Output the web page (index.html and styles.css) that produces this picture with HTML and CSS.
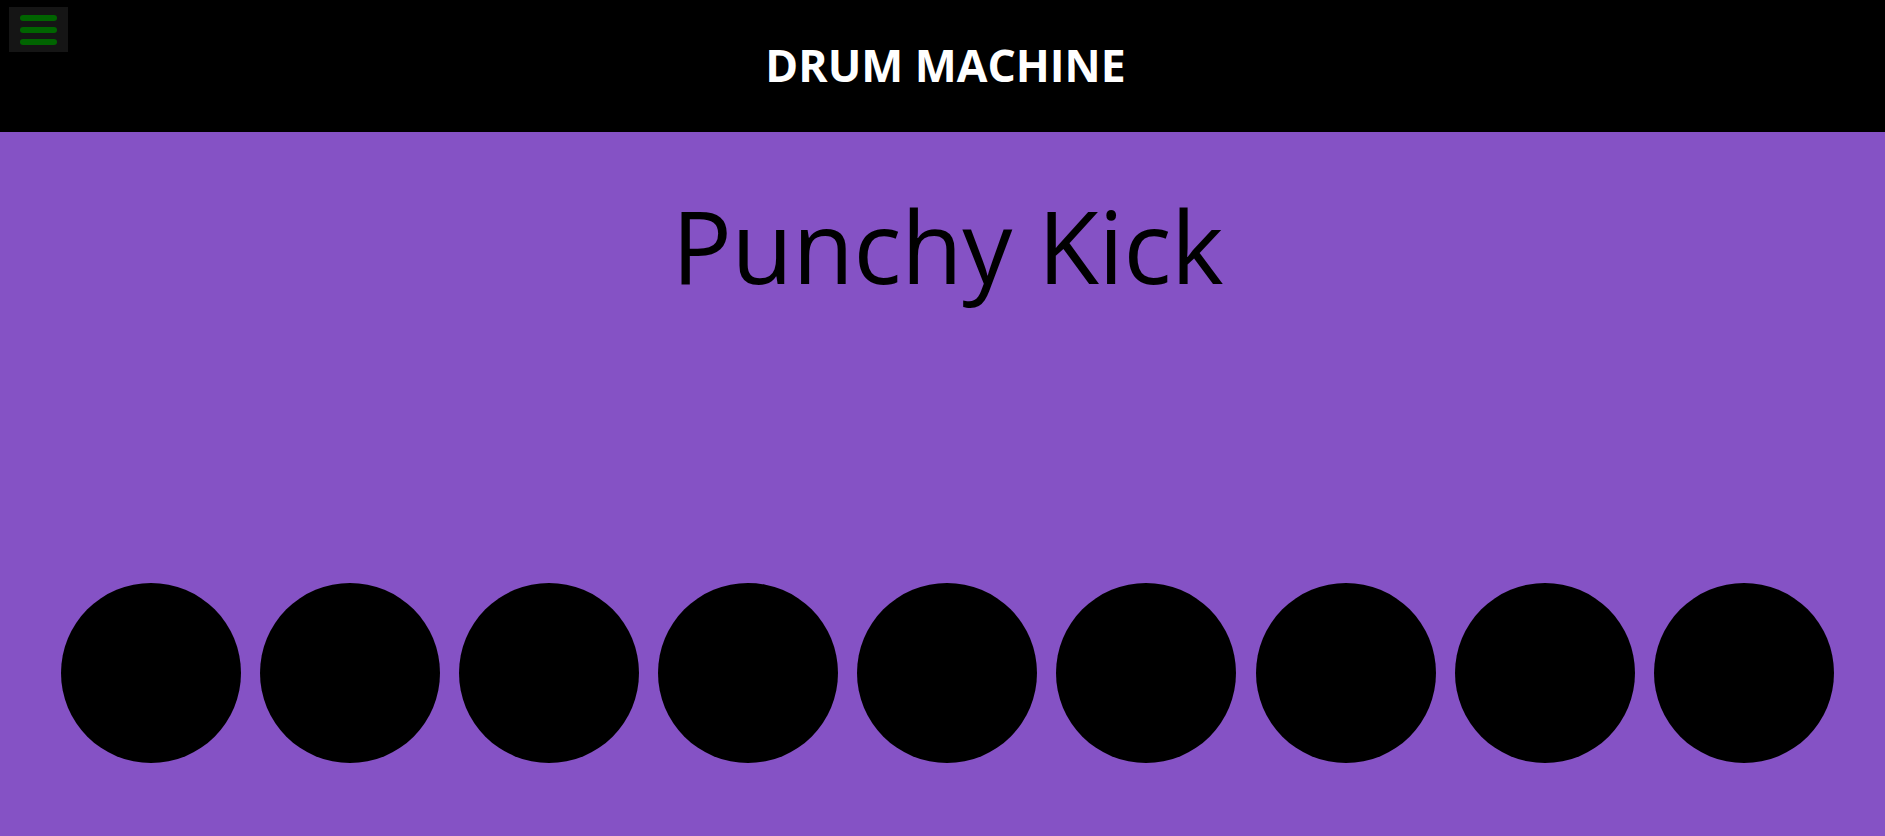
FILE: index.html
```html
<!DOCTYPE html>
<html lang="en">
<head>
<meta charset="utf-8">
<title>Drum Machine</title>
<link rel="stylesheet" href="styles.css">
</head>
<body>
<header class="topbar">
  <button class="menu-btn" aria-label="Menu">
    <span class="menu-bar"></span>
    <span class="menu-bar"></span>
    <span class="menu-bar"></span>
  </button>
  <h1 class="app-title">DRUM MACHINE</h1>
</header>
<main class="stage">
  <h2 class="sound-name">Punchy Kick</h2>
  <div class="pads">
    <div class="pad"></div>
    <div class="pad"></div>
    <div class="pad"></div>
    <div class="pad"></div>
    <div class="pad"></div>
    <div class="pad"></div>
    <div class="pad"></div>
    <div class="pad"></div>
    <div class="pad"></div>
  </div>
</main>
</body>
</html>
```

FILE: styles.css
```css
* { box-sizing: border-box; }
html, body {
  margin: 0;
  padding: 0;
  height: 100%;
}
body {
  font-family: "Open Sans", "Noto Sans", sans-serif;
  background: #8552c5;
  overflow: hidden;
}
.topbar {
  position: relative;
  height: 132px;
  background: #000;
  display: flex;
  align-items: center;
  justify-content: center;
  padding-left: 6px;
  padding-bottom: 2px;
}
.menu-btn {
  position: absolute;
  left: 9px;
  top: 7px;
  width: 59px;
  height: 45px;
  background: #151515;
  border: none;
  padding: 0;
  display: flex;
  flex-direction: column;
  align-items: center;
  justify-content: center;
  gap: 6px;
}
.menu-bar {
  display: block;
  width: 37px;
  height: 6px;
  border-radius: 3px;
  background: #006400;
}
.app-title {
  margin: 0;
  color: #fff;
  font-size: 44.5px;
  font-weight: 700;
  letter-spacing: 0;
  line-height: 1;
}
.stage {
  padding-left: 10px;
}
.sound-name {
  margin: 0;
  padding-top: 43px;
  text-align: center;
  font-weight: 400;
  font-size: 100px;
  line-height: 140px;
  color: #000;
  letter-spacing: -0.3px;
}
.pads {
  display: flex;
  gap: 19.1px;
  padding-left: 51px;
  margin-top: 268px;
}
.pad {
  width: 180px;
  height: 180px;
  flex: none;
  border-radius: 50%;
  background: #000;
}
```
